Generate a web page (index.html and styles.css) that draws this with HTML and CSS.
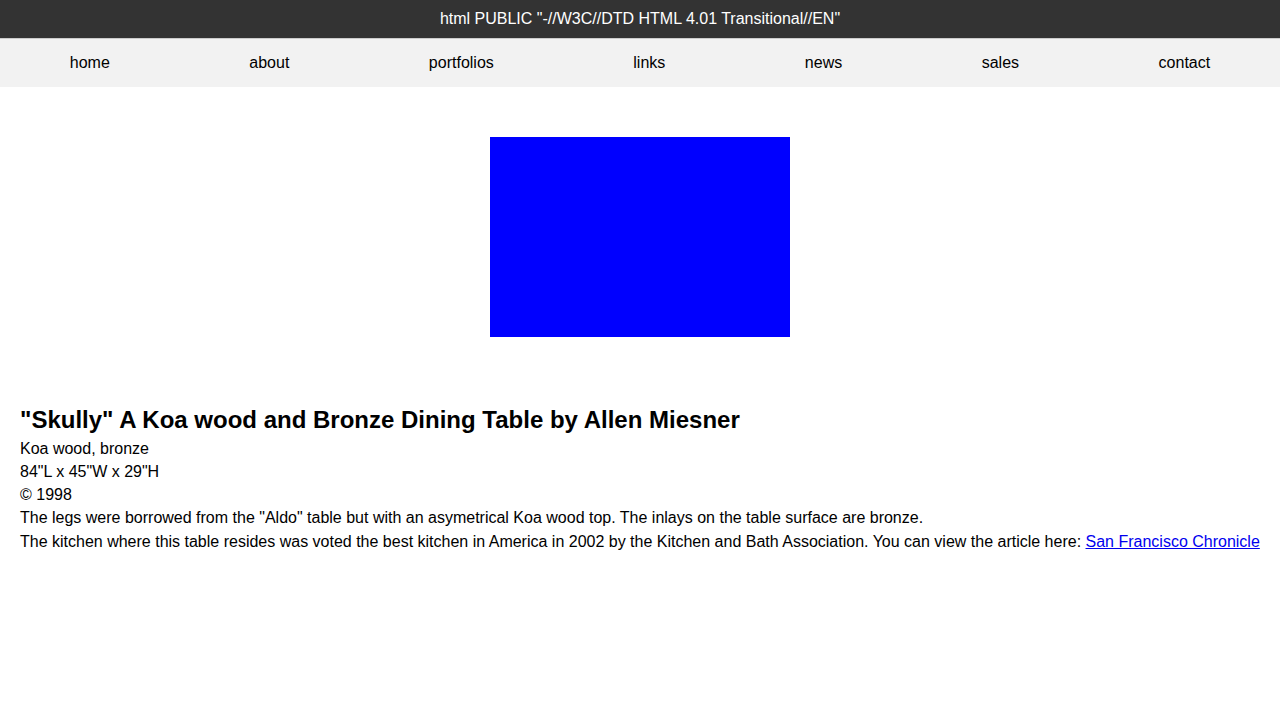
FILE: index.html
```html
<!DOCTYPE html>
<html>
<head>
<meta charset="utf-8">
<link rel="stylesheet" href="styles.css">
</head>
<body>
<div class="topbar">html PUBLIC "-//W3C//DTD HTML 4.01 Transitional//EN"</div>
<nav class="nav">
  <a href="#">home</a>
  <a href="#">about</a>
  <a href="#">portfolios</a>
  <a href="#">links</a>
  <a href="#">news</a>
  <a href="#">sales</a>
  <a href="#">contact</a>
</nav>
<div class="hero"><div class="photo"></div></div>
<div class="content">
  <h1>"Skully" A Koa wood and Bronze Dining Table by Allen Miesner</h1>
  <div class="line">Koa wood, bronze</div>
  <div class="line">84"L x 45"W x 29"H</div>
  <div class="line">© 1998</div>
  <p>The legs were borrowed from the "Aldo" table but with an asymetrical Koa wood top. The inlays on the table surface are bronze.</p>
  <p>The kitchen where this table resides was voted the best kitchen in America in 2002 by the Kitchen and Bath Association. You can view the article here: <a href="#">San Francisco Chronicle</a></p>
</div>
</body>
</html>
```
FILE: styles.css
```css
html, body { margin: 0; padding: 0; }
body {
  font-family: "Liberation Sans", Arial, sans-serif;
  font-size: 16px;
  line-height: 1.45;
  color: #000;
  background: #fff;
}
.topbar {
  background: #333;
  color: #fff;
  text-align: center;
  height: 38px;
  line-height: 38px;
  border-bottom: 1px solid #ccc;
}
.nav {
  display: flex;
  justify-content: space-around;
  align-items: center;
  height: 48px;
  background: #f2f2f2;
}
.nav a { color: #000; text-decoration: none; }
.hero {
  display: flex;
  justify-content: center;
  padding: 50px 0;
}
.photo { width: 300px; height: 200px; background: #0000ff; }
.content { padding: 15px 20px 20px; }
.content h1 {
  font-size: 24px;
  line-height: 32.8px;
  padding-top: 2px;
  margin: 0;
}
.content p { margin: 0; }
.content a { color: #0000ee; }
```
